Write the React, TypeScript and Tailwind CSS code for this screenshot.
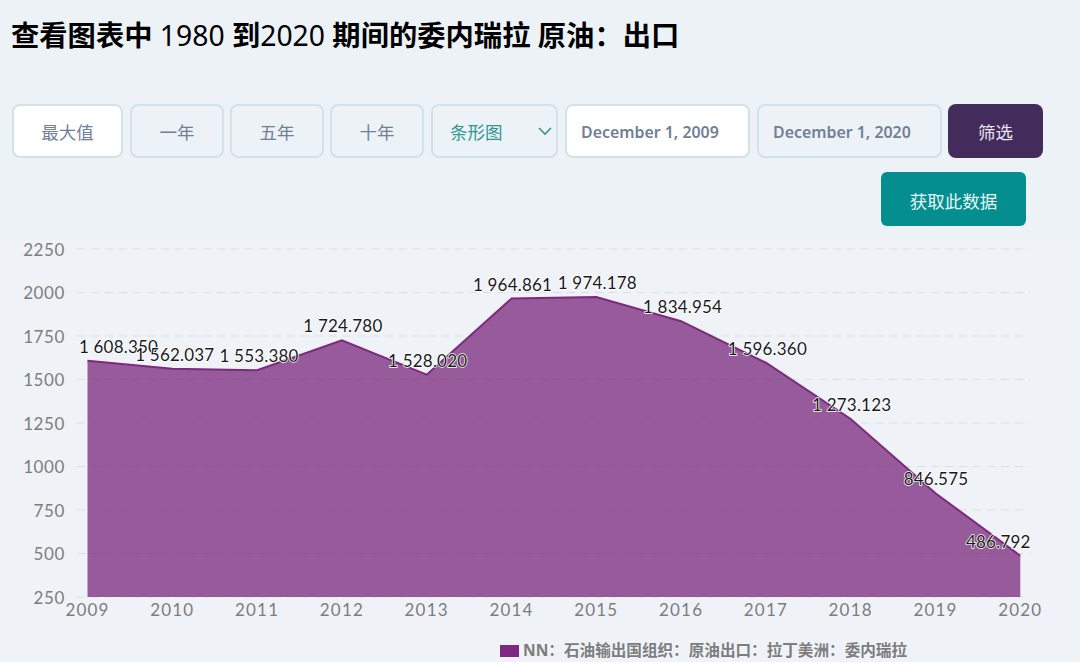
const FONT = "font-['Noto_Sans','Noto_Sans_CJK_SC',sans-serif]";

const DATA: { year: number; value: number; label: string; dx: number }[] = [
  { year: 2009, value: 1608.35, label: '1 608.350', dx: 31 },
  { year: 2010, value: 1562.037, label: '1 562.037', dx: 2.5 },
  { year: 2011, value: 1553.38, label: '1 553.380', dx: 2 },
  { year: 2012, value: 1724.78, label: '1 724.780', dx: 1 },
  { year: 2013, value: 1528.02, label: '1 528.020', dx: 1 },
  { year: 2014, value: 1964.861, label: '1 964.861', dx: 1 },
  { year: 2015, value: 1974.178, label: '1 974.178', dx: 1 },
  { year: 2016, value: 1834.954, label: '1 834.954', dx: 1.5 },
  { year: 2017, value: 1596.36, label: '1 596.360', dx: 1.5 },
  { year: 2018, value: 1273.123, label: '1 273.123', dx: 1 },
  { year: 2019, value: 846.575, label: '846.575', dx: 0.5 },
  { year: 2020, value: 486.792, label: '486.792', dx: -22 },
];

const TICKS = [2250, 2000, 1750, 1500, 1250, 1000, 750, 500, 250];

const xOf = (year: number) => 87.5 + (year - 2009) * 84.8;
const yOf = (value: number) => 357 - (value - 250) * 0.174;

function Chart() {
  const line = DATA.map((d) => `${xOf(d.year)},${yOf(d.value)}`).join(' ');
  const area = `87.5,357 ${line} 1020.3,357`;

  return (
    <svg width="1080" height="422" viewBox="0 0 1080 422" className="block">
      {TICKS.map((t) => (
        <g key={t}>
          <line x1="77" x2="1030" y1={yOf(t)} y2={yOf(t)} stroke="#d9e0e3" strokeWidth="1" strokeDasharray="8 6" />
          <text x="65" y={yOf(t) + 6.5} textAnchor="end" fontSize="17" letterSpacing="0.6" fill="#7d7d7d" fontFamily="Lato, sans-serif">
            {t}
          </text>
        </g>
      ))}
      <polygon points={area} fill="#7b2a7e" fillOpacity="0.76" />
      <polyline points={line} fill="none" stroke="#7b2a7e" strokeWidth="2" />
      {DATA.map((d) => (
        <text key={d.year} x={xOf(d.year)} y={376} textAnchor="middle" fontSize="17" letterSpacing="1.2" fill="#7d7d7d" fontFamily="Lato, sans-serif">
          {d.year}
        </text>
      ))}
      {DATA.map((d) => (
        <text
          key={d.label}
          x={xOf(d.year) + d.dx}
          y={yOf(d.value) - 8}
          textAnchor="middle"
          fontSize="17"
          letterSpacing="0.2"
          fill="#1a1a1a"
          stroke="#ffffff"
          strokeWidth="1.5"
          paintOrder="stroke"
          fontFamily="Lato, sans-serif"
        >
          {d.label}
        </text>
      ))}
    </svg>
  );
}

export default function App() {
  return (
    <div className={`w-[1080px] h-[662px] overflow-hidden bg-[#edf2f7] ${FONT}`}>
      <h1 className="pl-[11px] pt-[15px] h-[104px] text-[28.3px] leading-[40px] font-bold text-black">
        查看图表中 <span className="font-normal">1980</span> 到<span className="font-normal">2020</span> 期间的委内瑞拉 原油：出口
      </h1>

      <div className="flex pl-3 h-[54px] text-[17.5px] text-[#718096]">
        <button className="w-[111px] mr-[7px] pt-[3px] rounded-lg border-2 border-[#d2e2ea] bg-white">最大值</button>
        <button className="w-[94px] mr-[6px] pt-[3px] rounded-lg border-2 border-[#d2e2ea]">一年</button>
        <button className="w-[94px] mr-[6px] pt-[3px] rounded-lg border-2 border-[#d2e2ea]">五年</button>
        <button className="w-[94px] mr-[7px] pt-[3px] rounded-lg border-2 border-[#d2e2ea]">十年</button>
        <div className="w-[127px] mr-[7px] pl-[17px] pr-[4px] flex items-center justify-between rounded-lg border-2 border-[#d2e2ea] text-[#319795]">
          <span className="pt-[2px]">条形图</span>
          <svg width="14" height="14" viewBox="0 0 14 14" fill="none" stroke="#319795" strokeWidth="1.6">
            <path d="M1 4l6 6 6-6" />
          </svg>
        </div>
        <div className="w-[185px] mr-[7px] pl-[14px] pt-[3px] flex items-center rounded-lg border-2 border-[#d2e2ea] bg-white text-[15.9px] font-semibold">
          December 1, 2009
        </div>
        <div className="w-[185px] mr-[6px] pl-[14px] pt-[3px] flex items-center rounded-lg border-2 border-[#d2e2ea] text-[15.9px] font-semibold">
          December 1, 2020
        </div>
        <button className="w-[95px] pt-[3px] rounded-lg bg-[#432c5c] text-[#e9e3f0]">筛选</button>
      </div>

      <div className="flex justify-end pr-[54px] mt-[14px] h-[54px]">
        <button className="w-[145px] pt-[4px] rounded-md bg-[#058e90] text-[17.5px] text-[#e6f6f6]">获取此数据</button>
      </div>

      <div className="mt-[14px] bg-[#eff3f7]">
        <Chart />
      </div>

      <div className="relative -mt-[22px] flex items-center pl-[500px] h-[22px] text-[15.6px] font-bold text-[#7d7d7d] whitespace-nowrap">
        <span className="w-[19px] h-[12px] mr-[4px] bg-[#7e2a82]" />
        NN：石油输出国组织：原油出口：拉丁美洲：委内瑞拉
      </div>
    </div>
  );
}
